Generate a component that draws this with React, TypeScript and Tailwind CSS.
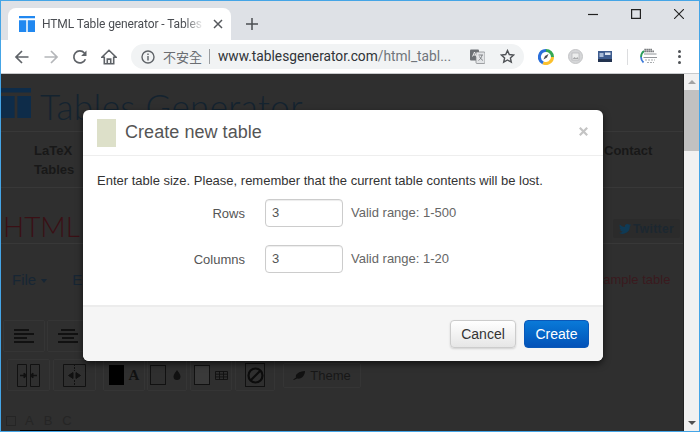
import React from "react";

const Back = ({ c = "#5f6368" }: { c?: string }) => (
  <svg width="16" height="16" viewBox="0 0 16 16" fill="none" stroke={c} strokeWidth="1.7">
    <path d="M14.5 8H2M8 2 2 8l6 6" />
  </svg>
);
const Forward = () => (
  <svg width="16" height="16" viewBox="0 0 16 16" fill="none" stroke="#b4b6b9" strokeWidth="1.7">
    <path d="M1.5 8H14M8 2l6 6-6 6" />
  </svg>
);
const Reload = () => (
  <svg width="16" height="16" viewBox="0 0 16 16" fill="none">
    <path d="M13.4 10.2A6 6 0 1 1 12.4 4" stroke="#5f6368" strokeWidth="1.7" />
    <path d="M14.5 1.5v5.4H9.1z" fill="#5f6368" />
  </svg>
);
const Home = () => (
  <svg width="16" height="16" viewBox="0 0 16 16" fill="none" stroke="#5f6368" strokeWidth="1.6">
    <path d="M8 1.3.9 8.2h2.4v6.5h9.4V8.2h2.4zM6.3 14.7v-4.6h3.4v4.6" />
  </svg>
);
const Info = () => (
  <svg width="14" height="14" viewBox="0 0 14 14" fill="none">
    <circle cx="7" cy="7" r="6" stroke="#5f6368" strokeWidth="1.4" />
    <path d="M6.3 6h1.4v4.4H6.3zM6.3 3.5h1.4v1.4H6.3z" fill="#5f6368" />
  </svg>
);
const TableLogo = ({ c, s }: { c: string; s: number }) => (
  <svg width={s} height={s} viewBox="0 0 15 15" fill={c}>
    <path d="M0 0h15v2.2H0zM0 4h6.8v11H0zM8.2 4H15v11H8.2z" />
  </svg>
);

function Tab() {
  return (
    <div className="h-[39px] bg-[#dee1e6] flex items-end pl-[7px]">
      <div className="w-[223px] h-[32px] bg-white rounded-t-[8px] flex items-center pl-[11px] relative">
        <TableLogo c="#2188f0" s={16} />
        <span className="ml-[7px] w-[162px] overflow-hidden whitespace-nowrap text-[12px] text-[#4a4d52] font-['Roboto',sans-serif] tracking-[-0.1px] [mask-image:linear-gradient(to_right,black_88%,transparent)]">
          HTML Table generator - Tables Generator
        </span>
        <svg className="ml-[9px]" width="10" height="10" viewBox="0 0 10 10" stroke="#55585c" strokeWidth="1.5">
          <path d="M1 1l8 8M9 1 1 9" />
        </svg>
      </div>
      <svg className="ml-[15px] mb-[10px]" width="12" height="12" viewBox="0 0 12 12" stroke="#4b4e52" strokeWidth="1.5">
        <path d="M6 0v12M0 6h12" />
      </svg>
      <div className="ml-auto flex items-start h-full pt-[8px] pr-[15px] gap-[33px]">
        <svg width="10" height="10" viewBox="0 0 10 10" stroke="#222" strokeWidth="1.2">
          <path d="M0 5.5h10" />
        </svg>
        <svg width="10" height="10" viewBox="0 0 10 10" fill="none" stroke="#222" strokeWidth="1.2">
          <path d="M.6.6h8.8v8.8H.6z" />
        </svg>
        <svg width="10" height="10" viewBox="0 0 10 10" stroke="#222" strokeWidth="1.1">
          <path d="M0 0l10 10M10 0 0 10" />
        </svg>
      </div>
    </div>
  );
}

function Toolbar() {
  return (
    <div className="h-[34px] bg-white flex items-center pl-[13px] border-b border-[#c8cacc]">
      <div className="flex items-center gap-[13px]">
        <Back />
        <Forward />
        <Reload />
        <Home />
      </div>
      <div className="ml-[14px] w-[393px] h-[25px] bg-[#f1f3f4] rounded-full flex items-center pl-[10px]">
        <Info />
        <span className="ml-[8px] text-[13px] text-[#6b6e72] font-['Noto_Sans_CJK_TC',sans-serif]">不安全</span>
        <span className="ml-[7px] w-px h-[15px] bg-[#9a9da0]" />
        <span className="ml-[8px] w-[236px] whitespace-nowrap overflow-hidden text-[13.75px] text-[#70757a] font-['Roboto',sans-serif]">
          <span className="text-[#303438]">www.tablesgenerator.com</span>/html_tabl...
        </span>
        <svg className="ml-[16px]" width="15" height="15" viewBox="0 0 15 15">
          <rect x="0" y="0.5" width="9" height="11" rx="1" fill="#6c7074" />
          <rect x="6" y="3" width="9" height="11.5" rx="1" fill="#e3e5e7" stroke="#7c7f83" strokeWidth="0.7" />
          <path d="M2.5 7.5 4.5 3l2 4.5M3.2 6h2.6" stroke="#fff" strokeWidth="0.8" fill="none" />
          <path d="M8.5 6h4.5M12 6c-.4 2.500-2 4.500-3.500 5.500M9.500 7.500c.6 1.500 2 3 3.500 4" stroke="#6c7074" strokeWidth="0.8" fill="none" />
        </svg>
        <svg className="ml-[15px]" width="15" height="15" viewBox="0 0 15 15" fill="none" stroke="#4f5256" strokeWidth="1.4">
          <path d="M7.500 1.500 9.300 5.500l4.300.5-3.200 2.900.9 4.300-3.800-2.200-3.800 2.200.9-4.300L1.400 6l4.300-.5z" />
        </svg>
      </div>
      <svg className="ml-[14px]" width="16" height="16" viewBox="0 0 16 16" fill="none" strokeWidth="3">
        <path d="M8 1.500a6.500 6.500 0 0 1 6.500 6.500" stroke="#34a853" />
        <path d="M14.500 8A6.500 6.500 0 0 1 5 13.800" stroke="#fbc02d" />
        <path d="M5 13.800A6.500 6.500 0 0 1 8 1.500" stroke="#2a6fdb" />
        <path d="M5.500 10.500 7 7l3.500-2L9 8.500z" fill="#4a4d52" stroke="none" />
      </svg>
      <svg className="ml-[14px]" width="15" height="15" viewBox="0 0 15 15">
        <circle cx="7.500" cy="7.500" r="7" fill="#d5d6d8" stroke="#c4c5c7" />
        <rect x="4" y="4" width="7" height="7" fill="#eceded" stroke="#b4b5b7" strokeWidth="0.7" />
        <path d="M4.500 10l2-2 1.500 1.200L9.500 8l1 2z" fill="#a8a9ab" />
      </svg>
      <svg className="ml-[15px]" width="14" height="12" viewBox="0 0 14 12">
        <rect width="14" height="10.500" fill="#3f5d8f" />
        <rect x="7" y="1.500" width="5.500" height="2.500" fill="#dfe6f0" />
        <rect x="1.500" y="2" width="4" height="4" fill="#a9bcd8" />
        <rect y="8" width="14" height="3" fill="#22324f" />
      </svg>
      <span className="ml-[15px] w-px h-[16px] bg-[#dcdddf]" />
      <svg className="ml-[12px]" width="17" height="17" viewBox="0 0 17 17" fill="none">
        <path d="M1 9a7.500 7.500 0 0 1 3-6" stroke="#2a9d5c" strokeWidth="1.800" />
        <path d="M1 9a7.500 7.500 0 0 0 2.500 5.500" stroke="#3b78d8" strokeWidth="1.800" />
        <path d="M4.500 3.400h9.500M4.500 1.500h8" stroke="#45484c" strokeWidth="1.600" strokeDasharray="1.200 0.800" />
        <path d="M4 6h12.500M3.500 9.500h13.500" stroke="#85888c" strokeWidth="0.900" />
        <path d="M5 12h10M7 14.500h7" stroke="#a8abae" strokeWidth="1.200" strokeDasharray="2 1" />
      </svg>
      <div className="ml-[21px] flex flex-col gap-[2.500px]">
        <span className="w-[3px] h-[3px] rounded-full bg-[#4f5256]" />
        <span className="w-[3px] h-[3px] rounded-full bg-[#4f5256]" />
        <span className="w-[3px] h-[3px] rounded-full bg-[#4f5256]" />
      </div>
    </div>
  );
}

const ToolBtn = ({ cls, children }: { cls: string; children: React.ReactNode }) => (
  <div className={`${cls} h-[32px] border border-[#353535] rounded-[2px] flex items-center justify-center gap-[5px] shrink-0`}>
    {children}
  </div>
);

const AlignIcon = ({ center }: { center?: boolean }) => (
  <svg width="20" height="15" viewBox="0 0 20 15" fill="#111">
    {center ? (
      <path d="M3 0h14v2H3zM0 4h20v2H0zM4 8h12v2H4zM0 12h20v2H0z" />
    ) : (
      <path d="M0 0h15v2H0zM0 4h20v2H0zM0 8h13v2H0zM0 12h20v2H0z" />
    )}
  </svg>
);

function Background() {
  return (
    <div className="flex-1 h-full overflow-hidden bg-[#2f2f2f] flex flex-col font-['Liberation_Sans',sans-serif]">
      <div className="h-[58px] border-b border-[#383838] flex items-start pt-[14px] shrink-0">
        <TableLogo c="#0e2c49" s={30} />
        <span className="ml-[9px] text-[35px] leading-[36px] text-[#14232f] font-['Lato',sans-serif] font-light tracking-[0.4px] whitespace-nowrap">
          Tables Generator
        </span>
      </div>
      <div className="h-[56px] border-b border-[#383838] relative shrink-0 text-[13px] font-bold text-[#181818] leading-[19px]">
        <div className="pl-[33px] pt-[9px]">
          LaTeX
          <br />
          Tables
        </div>
        <div className="absolute left-[603px] top-[9px]">Contact</div>
      </div>
      <div className="h-[56px] border-b border-[#383838] flex items-center pl-[2px] pt-[20px] shrink-0">
        <span className="text-[28px] text-[#3a1015] font-['Lato',sans-serif] font-light leading-none">HTML</span>
        <div className="ml-auto mr-[3px] mt-[6px] w-[67px] h-[19px] bg-[#2b2b2b] rounded-[2px] flex items-center justify-center gap-[2px] text-[12px] font-bold text-[#1c2730] tracking-[0.4px]">
          <svg width="12" height="10" viewBox="0 0 24 20" fill="#0f3a55">
            <path d="M24 2.400c-.9.400-1.800.7-2.800.8 1-.6 1.800-1.500 2.200-2.700-.9.600-2 1-3.100 1.200A4.900 4.900 0 0 0 11.900 6.200C7.800 6 4.200 4 1.700 1 .4 3.300 1.100 6.200 3.200 7.600c-.8 0-1.600-.2-2.200-.6 0 2.400 1.700 4.400 3.900 4.900-.7.200-1.500.2-2.200.1.600 2 2.400 3.400 4.600 3.400A9.900 9.900 0 0 1 0 17.400 14 14 0 0 0 21.500 5c1-.7 1.800-1.600 2.500-2.600z" />
          </svg>
          Twitter
        </div>
      </div>
      <div className="h-[76px] flex items-start pt-[26px] pl-[11px] shrink-0 text-[15px] leading-[20px] text-[#172634] relative">
        <span>File</span>
        <span className="ml-[5px] mt-[9px] w-0 h-0 border-x-[3.500px] border-x-transparent border-t-[4px] border-t-[#172634]" />
        <span className="ml-[25px]">Edit</span>
        <span className="absolute left-[587px] whitespace-nowrap text-[#3a1a1e] text-[13px]">Example table</span>
      </div>
      <div className="flex items-center pl-[2px] gap-[2px] shrink-0">
        <ToolBtn cls="w-[42px]"><AlignIcon /></ToolBtn>
        <ToolBtn cls="w-[42px]"><AlignIcon center /></ToolBtn>
      </div>
      <div className="flex items-start mt-[7px] pl-[6px] shrink-0">
        <ToolBtn cls="w-[43px]">
          <svg width="23" height="23" viewBox="0 0 23 23" fill="none" stroke="#111">
            <path d="M.5.500h9v22h-9zM13.500.500h9v22h-9z" />
            <path d="M3 11.500h5M20 11.500h-5" strokeWidth="1.500" />
            <path d="M7 9l3 2.500-3 2.500zM16 9l-3 2.500 3 2.500z" fill="#111" />
          </svg>
        </ToolBtn>
        <ToolBtn cls="w-[43px] ml-[3px]">
          <svg width="23" height="23" viewBox="0 0 23 23" fill="none" stroke="#111">
            <path d="M.5.500h22v22H.5z" />
            <path d="M11.500 0v7M11.500 16v7" strokeDasharray="2 1" />
            <path d="M10 8.500 5.500 11.500l4.500 3zM13 8.500l4.500 3-4.500 3z" fill="#111" />
          </svg>
        </ToolBtn>
        <ToolBtn cls="w-[42px] ml-[7px]">
          <span className="w-[15px] h-[20px] bg-black" />
          <span className="text-[15px] font-bold text-[#111] font-['Liberation_Serif',serif]">A</span>
        </ToolBtn>
        <ToolBtn cls="w-[40px] ml-[2px] pr-[3px]">
          <span className="w-[16px] h-[20px] border border-[#111]" />
          <svg className="ml-[2px]" width="8" height="10" viewBox="0 0 8 10" fill="#111">
            <path d="M4 0C3 2 .5 4 .5 6.500a3.500 3.500 0 0 0 7 0C7.500 4 5 2 4 0z" />
          </svg>
        </ToolBtn>
        <ToolBtn cls="w-[42px] ml-[3px]">
          <span className="w-[16px] h-[20px] border border-[#111] bg-[#3a3a3a]" />
          <svg width="13" height="9" viewBox="0 0 13 9" fill="none" stroke="#111" strokeWidth="0.900">
            <path d="M.5.500h12v8H.5zM.5 3.200h12M.5 5.900h12M4.500.500v8M8.500.500v8" />
          </svg>
        </ToolBtn>
        <ToolBtn cls="w-[40px] ml-[3px]">
          <div className="w-[20px] h-[24px] border border-[#111] flex items-center justify-center">
            <svg width="17" height="17" viewBox="0 0 17 17" fill="none" stroke="#0c0c0c" strokeWidth="2.200">
              <circle cx="8.500" cy="8.500" r="7" />
              <path d="M13.500 3.500l-10 10" />
            </svg>
          </div>
        </ToolBtn>
        <div className="ml-[8px] mt-[4px] w-[78px] h-[25px] border border-[#353535] rounded-[2px] flex items-center justify-center gap-[5px] text-[13px] text-[#171717] shrink-0">
          <svg width="12" height="9" viewBox="0 0 12 9" fill="#111">
            <path d="M0 9c1-1 2-2 3-2.500C2 3 6 .500 12 0c0 4-3 8.500-8 7.500L1 9z" />
          </svg>
          Theme
        </div>
      </div>
      <div className="flex items-center pl-[5px] mt-[22px] h-[15px] gap-[10px] text-[13px] text-[#252525] shrink-0">
        <span className="w-[10px] h-[10px] border border-[#252525] mr-[-1px]" />
        <span>A</span>
        <span>B</span>
        <span>C</span>
      </div>
      <div className="ml-[19px] mt-[2px] w-[60px] h-[2px] bg-black shrink-0" />
    </div>
  );
}

function Scrollbar() {
  return (
    <div className="w-[15px] h-full bg-[#f1f1f1] flex flex-col items-center border-l border-[#222] shrink-0 box-content">
      <div className="h-[16px] flex items-center justify-center">
        <span className="w-0 h-0 border-x-[4px] border-x-transparent border-b-[4px] border-b-[#a3a3a3]" />
      </div>
      <div className="w-full h-[61px] bg-[#c1c1c1]" />
      <div className="mt-auto h-[16px] flex items-center justify-center">
        <span className="w-0 h-0 border-x-[4px] border-x-transparent border-t-[4px] border-t-[#505050]" />
      </div>
    </div>
  );
}

function Field({ label, range, mb }: { label: string; range: string; mb?: string }) {
  return (
    <div className={`flex items-center ${mb ?? ""}`}>
      <span className="w-[162px] text-right text-[#555] text-[13px] leading-[18px] pt-[1px]">{label}</span>
      <div className="ml-[20px] w-[78px] h-[28px] border border-[#ccc] rounded-[4px] shadow-[inset_0_1px_1px_rgba(0,0,0,0.075)] flex items-center pl-[6px] text-[13px] leading-[18px] text-[#555]">
        3
      </div>
      <span className="ml-[8px] text-[#666] text-[13px] leading-[18px]">{range}</span>
    </div>
  );
}

function Modal() {
  return (
    <div className="absolute left-[82px] top-[36px] w-[520px] h-[251px] bg-white rounded-[6px] shadow-[0_3px_7px_rgba(0,0,0,0.6)] flex flex-col font-['Liberation_Sans',sans-serif] overflow-hidden">
      <div className="h-[46px] border-b border-[#eee] flex items-center pl-[14px] shrink-0">
        <span className="w-[19px] h-[28px] bg-[#dde0c9]" />
        <span className="ml-[9px] text-[18px] text-[#555] tracking-[0.05px]">Create new table</span>
        <svg className="ml-auto mr-[15px] mb-[2px]" width="9" height="9" viewBox="0 0 9 9" stroke="#c4c4c4" strokeWidth="2.200">
          <path d="M.8.800l7.400 7.400M8.200.800.800 8.200" />
        </svg>
      </div>
      <div className="flex-1 pl-[14px] pt-[16px]">
        <p className="text-[13px] leading-[17px] text-[#333] mb-[10px]">
          Enter table size. Please, remember that the current table contents will be lost.
        </p>
        <div className="-ml-[14px]">
          <Field label="Rows" range="Valid range: 1-500" mb="mb-[18px]" />
          <Field label="Columns" range="Valid range: 1-20" />
        </div>
      </div>
      <div className="h-[56px] bg-[#f5f5f5] border-t-2 border-[#ececec] shrink-0 flex items-center justify-end pr-[14px] gap-[8px] text-[14px]">
        <div className="w-[66px] h-[28px] rounded-[4px] border border-[#ccc] bg-gradient-to-b from-white to-[#e6e6e6] text-[#333] flex items-center justify-center shadow-[0_1px_2px_rgba(0,0,0,0.15)]">
          Cancel
        </div>
        <div className="w-[65px] h-[28px] rounded-[4px] border border-[#0a58b8] bg-gradient-to-b from-[#0a7ad8] to-[#0452b8] text-white flex items-center justify-center">
          Create
        </div>
      </div>
    </div>
  );
}

export default function App() {
  return (
    <div className="w-[700px] h-[432px] overflow-hidden border border-[#45a5e6] flex flex-col bg-white">
      <Tab />
      <Toolbar />
      <div className="flex-1 min-h-0 flex relative">
        <Background />
        <Scrollbar />
        <Modal />
      </div>
    </div>
  );
}
